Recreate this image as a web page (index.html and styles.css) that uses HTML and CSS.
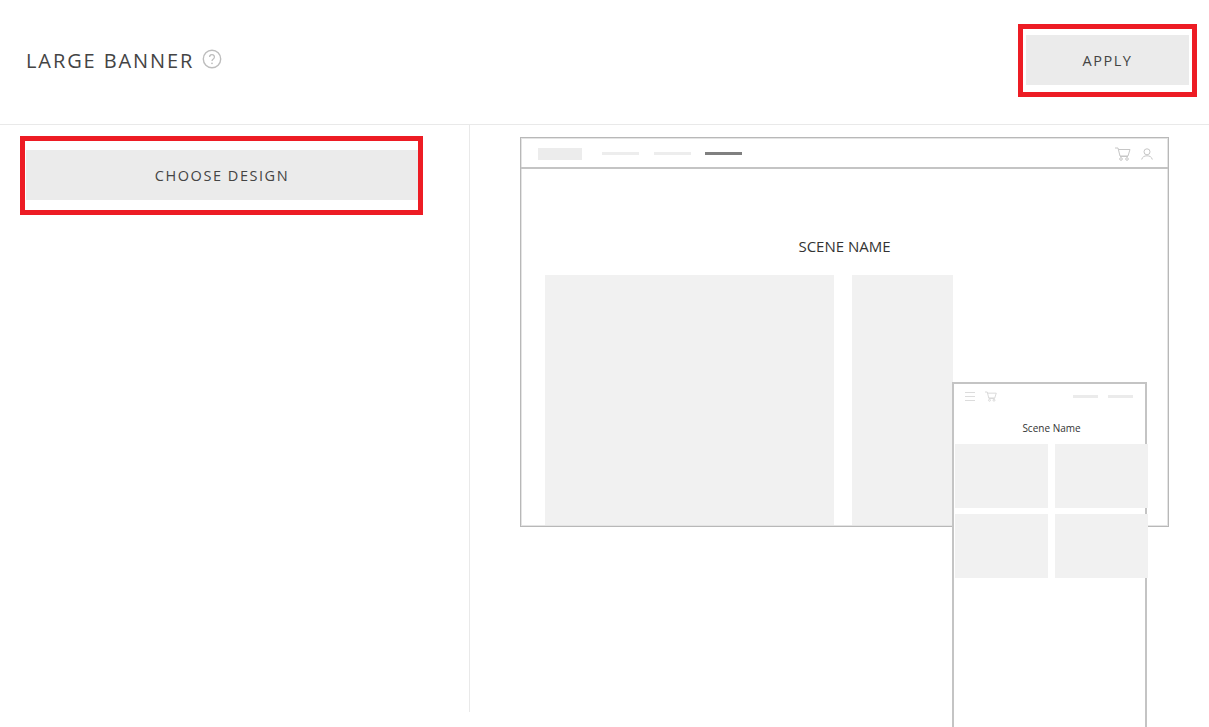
FILE: index.html
```html
<!DOCTYPE html>
<html lang="en">
<head>
<meta charset="utf-8">
<title>Large Banner</title>
<link rel="stylesheet" href="styles.css">
</head>
<body>
<header class="top">
  <div class="title-wrap">
    <h1 class="title">LARGE BANNER</h1>
    <svg class="help" width="20" height="20" viewBox="0 0 20 20" fill="none" aria-hidden="true">
      <circle cx="10" cy="10" r="8.7" stroke="#bdbdbd" stroke-width="1.4"/>
      <path d="M7.6 8a2.4 2.4 0 1 1 3.7 2c-.9.6-1.3 1-1.3 2" stroke="#bdbdbd" stroke-width="1.3"/>
      <circle cx="10" cy="14.3" r=".85" fill="#bdbdbd"/>
    </svg>
  </div>
  <div class="mark mark-apply"><button class="btn btn-apply">APPLY</button></div>
</header>
<main class="main">
  <aside class="side">
    <div class="mark mark-choose"><button class="btn btn-choose">CHOOSE DESIGN</button></div>
  </aside>
  <section class="preview">
    <div class="desktop">
      <div class="d-head">
        <span class="d-logo"></span>
        <span class="d-nav"></span>
        <span class="d-nav"></span>
        <span class="d-nav d-nav-on"></span>
        <span class="d-icons">
          <svg width="16" height="14" viewBox="0 0 16 14" fill="none" stroke="#c6c6c6" stroke-width="1"><path d="M0 1h3l2 8h8l2-6.5H3.5"/><path d="M5 9.5h8"/><circle cx="6" cy="12" r="1.3"/><circle cx="12" cy="12" r="1.3"/></svg>
          <svg width="12" height="12" viewBox="0 0 12 12" fill="none" stroke="#c6c6c6" stroke-width="1"><circle cx="6" cy="3.8" r="3"/><path d="M.7 11.500c.6-2.600 2.600-3.700 5.300-3.700s4.700 1.100 5.300 3.700"/></svg>
        </span>
      </div>
      <h2 class="d-scene">SCENE NAME</h2>
      <div class="d-tiles">
        <div class="tile d-tile-a"></div>
        <div class="tile d-tile-b"></div>
      </div>
    </div>
    <div class="mobile">
      <div class="m-head">
        <svg width="10" height="9" viewBox="0 0 10 9" stroke="#dcdcdc" stroke-width="1"><path d="M0 .5h10M0 4.500h10M0 8.500h10"/></svg>
        <svg class="m-cart" width="12" height="11" viewBox="0 0 16 14" fill="none" stroke="#d6d6d6" stroke-width="1.200"><path d="M0 1h3l2 8h8l2-6.500H3.500"/><path d="M5 9.500h8"/><circle cx="6" cy="12" r="1.300"/><circle cx="12" cy="12" r="1.300"/></svg>
        <span class="m-bar m-bar-first"></span>
        <span class="m-bar"></span>
      </div>
      <h3 class="m-scene">Scene Name</h3>
      <div class="m-tiles">
        <div class="tile"></div>
        <div class="tile"></div>
        <div class="tile"></div>
        <div class="tile"></div>
      </div>
    </div>
  </section>
</main>
</body>
</html>
```

FILE: styles.css
```css
* { box-sizing: border-box; }
html, body { margin: 0; padding: 0; }
body {
  width: 1209px;
  height: 727px;
  overflow: hidden;
  background: #fff;
  font-family: "Open Sans", "Liberation Sans", sans-serif;
  color: #444;
}
.top {
  height: 125px;
  border-bottom: 1px solid #e9e9e9;
  display: flex;
  justify-content: space-between;
  align-items: flex-start;
  padding: 24px 12px 0 26px;
}
.title-wrap {
  display: flex;
  align-items: flex-start;
  gap: 8px;
  padding-top: 22px;
}
.title {
  margin: 0;
  font-size: 20px;
  line-height: 30px;
  font-weight: 400;
  letter-spacing: 1.9px;
}
.help { margin-top: 3px; }
.mark { border: 5px solid #ed1c24; }
.mark-apply { width: 179px; height: 73px; padding: 6px 3px 7px; }
.mark-choose { width: 403px; height: 79px; padding: 9px 0 10px 1px; }
.btn {
  display: block;
  width: 100%;
  height: 50px;
  border: 0;
  padding: 0;
  background: #ebebeb;
  color: #444;
  font-family: inherit;
  font-size: 14.5px;
  letter-spacing: 1.55px;
  font-weight: 400;
}
.main { display: flex; height: 587px; }
.side {
  width: 470px;
  border-right: 1px solid #e9e9e9;
  padding: 11px 0 0 20px;
}
.preview {
  position: relative;
  flex: 1;
  padding: 12px 0 0 50px;
}
.desktop {
  width: 649px;
  height: 390px;
  border: 1px solid #b8b8b8;
  box-shadow: inset 0 0 0 1px #e4e4e4;
  padding: 0 0 0 24px;
  display: flex;
  flex-direction: column;
}
.d-head {
  height: 31px;
  margin-left: -24px;
  border-bottom: 2px solid #c4c4c4;
  display: flex;
  align-items: center;
  padding: 2px 15px 0 17px;
  flex: none;
}
.d-logo { width: 44px; height: 12px; background: #ececec; margin-right: 20px; }
.d-nav { width: 37px; height: 3px; background: #ededed; margin-right: 15px; }
.d-nav:nth-child(3) { margin-right: 14px; }
.d-nav-on { background: #808080; margin-right: 0; }
.d-icons { margin-left: auto; display: flex; align-items: center; gap: 10px; }
.d-scene {
  margin: 0 0 0 -24px;
  height: 106px;
  padding-top: 68px;
  text-align: center;
  font-size: 15px;
  line-height: 19px;
  font-weight: 400;
  color: #333;
  flex: none;
}
.d-tiles { display: flex; gap: 18px; }
.tile { background: #f1f1f1; }
.d-tile-a { width: 289px; height: 250px; }
.d-tile-b { width: 101px; height: 250px; }
.mobile {
  position: absolute;
  left: 482px;
  top: 257px;
  width: 195px;
  height: 360px;
  background: #fff;
  border-style: solid;
  border-width: 2px 2px 0 2px;
  border-color: #c4c4c4;
}
.m-head {
  display: flex;
  align-items: center;
  height: 24px;
  padding: 0 12px 0 11px;
}
.m-cart { margin-left: 10px; }
.m-bar { width: 25px; height: 3px; background: #ebebeb; margin-left: 10px; }
.m-bar-first { margin-left: auto; }
.m-scene {
  margin: 0;
  height: 36px;
  padding: 13px 0 0 4px;
  text-align: center;
  font-size: 10px;
  line-height: 14px;
  font-weight: 400;
  color: #333;
}
.m-tiles {
  display: grid;
  grid-template-columns: 93px 93px;
  grid-auto-rows: 64px;
  column-gap: 7px;
  row-gap: 6px;
  margin-left: 1px;
  width: 193px;
}
```
